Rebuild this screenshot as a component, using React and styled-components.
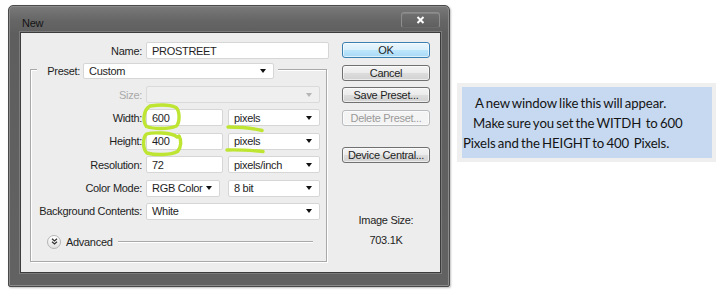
import React from 'react';
import styled, { createGlobalStyle } from 'styled-components';

const Global = createGlobalStyle`
    html, body {
        margin: 0;
        padding: 0;
        background: #ffffff;
    }
    * {
        box-sizing: border-box;
    }
`;

const Page = styled.div`
    position: relative;
    width: 723px;
    height: 291px;
    display: flex;
    align-items: flex-start;
    padding: 5px 0 0 8px;
    font-family: "Liberation Sans", Arial, sans-serif;
    font-size: 11px;
    letter-spacing: -0.3px;
    color: #1e1e1e;
`;

const Dialog = styled.div`
    width: 442px;
    height: 282px;
    display: flex;
    flex-direction: column;
    border: 1px solid #4a4a4a;
    border-radius: 5px 5px 2px 2px;
    background: linear-gradient(#7a7a7a 0px, #666666 14px, #5e5e5e 28px, #626262 100%);
    box-shadow: inset 0 0 0 1px #8c8c8c, 1px 1px 2px rgba(0, 0, 0, 0.25);
`;

const TitleBar = styled.div`
    height: 27px;
    display: flex;
    justify-content: space-between;
    align-items: flex-start;
    padding: 0 9px 0 13px;
`;

const Title = styled.span`
    margin-top: 10px;
    line-height: 14px;
    color: #151515;
`;

const CloseButton = styled.div`
    margin-top: 6px;
    width: 39px;
    height: 16px;
    border: 1px solid #8e8e8e;
    border-bottom-color: #6a6a6a;
    border-radius: 3px;
    background: linear-gradient(#707070, #5f5f5f);
    box-shadow: inset 0 1px 0 rgba(255, 255, 255, 0.15);
    display: flex;
    align-items: center;
    justify-content: center;
`;

const Content = styled.div`
    flex: 1;
    margin: 0 9px 14px 12px;
    display: flex;
    padding: 9px 10px 0 0;
    background: #ededed;
    box-shadow: 0 0 0 1px #3c3c3c, 0 0 0 2px #7c7c7c;
`;

const FormColumn = styled.div`
    width: 306px;
    display: flex;
    flex-direction: column;
`;

const NameRow = styled.div`
    display: grid;
    grid-template-columns: 121px 183px;
    column-gap: 4px;
    align-items: center;
`;

const Label = styled.span`
    text-align: right;
    white-space: nowrap;
    color: ${props => (props.disabled ? '#a9a9a9' : '#1e1e1e')};
`;

const Field = styled.div`
    height: ${props => props.h || 17}px;
    width: ${props => (props.w ? `${props.w}px` : 'auto')};
    display: flex;
    align-items: center;
    justify-content: space-between;
    padding: 0 7px 0 5px;
    background: ${props => (props.disabled ? '#efefef' : '#ffffff')};
    border: 1px solid ${props => (props.disabled ? '#dadada' : '#d6d6d6')};
    border-radius: 2px;
    white-space: nowrap;
`;

const Arrow = styled.span`
    width: 0;
    height: 0;
    border-left: 3.5px solid transparent;
    border-right: 3.5px solid transparent;
    border-top: 4px solid ${props => (props.disabled ? '#b5b5b5' : '#111111')};
`;

const Group = styled.div`
    margin: 10px 0 0 9px;
    width: 297px;
    height: 193px;
    border: 1px solid #a9a9a9;
    box-shadow: inset 1px 1px 0 #ffffff, 1px 1px 0 #ffffff;
    display: flex;
    flex-direction: column;
`;

const GroupHeader = styled.div`
    margin: -7px 0 0 6px;
    width: 241px;
    display: grid;
    grid-template-columns: 43px 191px;
    column-gap: 3px;
    align-items: center;
    background: #ededed;
`;

const Rows = styled.div`
    margin-top: 7px;
    display: grid;
    grid-template-columns: 111px 174px;
    column-gap: 4px;
    row-gap: 6.4px;
    align-items: center;
`;

const Pair = styled.div`
    display: grid;
    grid-template-columns: ${props => props.first}px 92px;
    justify-content: space-between;
`;

const AdvancedRow = styled.div`
    margin-top: 15px;
    display: flex;
    align-items: center;
    padding: 0 13px 0 16px;
`;

const Disclosure = styled.span`
    width: 14px;
    height: 14px;
    border-radius: 50%;
    border: 1px solid #b4b4b4;
    background: linear-gradient(#ffffff, #e2e2e2);
    display: flex;
    align-items: center;
    justify-content: center;
`;

const AdvancedText = styled.span`
    margin-left: 5px;
`;

const Rule = styled.span`
    flex: 1;
    margin-left: 5px;
    height: 2px;
    border-top: 1px solid #a9a9a9;
    border-bottom: 1px solid #ffffff;
`;

const ButtonColumn = styled.div`
    width: 88px;
    margin-left: auto;
    display: flex;
    flex-direction: column;
    align-items: center;
`;

const Button = styled.div`
    width: 88px;
    height: 16px;
    margin-top: ${props => props.gap || 0}px;
    display: flex;
    align-items: center;
    justify-content: center;
    border-radius: 3px;
    border: 1px solid ${props => (props.primary ? '#3c7fb1' : props.disabled ? '#b8bcbf' : '#707070')};
    color: ${props => (props.disabled ? '#9a9a9a' : '#1e1e1e')};
    background: ${props => props.primary
        ? 'linear-gradient(#eaf6fd 0%, #d9f0fc 50%, #bee6fd 51%, #a7d9f5 100%)'
        : props.disabled
            ? '#f4f4f4'
            : 'linear-gradient(#f4f4f4 0%, #ebebeb 50%, #dddddd 51%, #d2d2d2 100%)'};
    box-shadow: inset 0 0 0 1px rgba(255, 255, 255, 0.6);
`;

const SizeText = styled.div`
    margin-top: ${props => props.gap}px;
    line-height: 14px;
    white-space: nowrap;
`;

const Note = styled.div`
    margin: 78px 0 0 7px;
    width: 259px;
    padding: 4px 4px 4px 5px;
    background: #efefef;
`;

const NoteInner = styled.div`
    height: 71px;
    padding: 6px 0 0 1px;
    background: #c6d9f1;
    font-family: Lato, "Liberation Sans", sans-serif;
    font-size: 13.2px;
    letter-spacing: -0.1px;
    color: #141414;
`;

const NoteLine = styled.div`
    line-height: 20px;
    padding-left: ${props => props.indent}px;
    white-space: pre;
    word-spacing: -1px;
`;

const Marks = styled.svg`
    position: absolute;
    left: 0;
    top: 0;
    pointer-events: none;
`;

const Select = ({ children, w, disabled }) => (
    <Field w={w} disabled={disabled}>
        <span>{children}</span>
        <Arrow disabled={disabled} />
    </Field>
);

const App = () => {
    return (
        <Page>
            <Global />
            <Dialog>
                <TitleBar>
                    <Title>New</Title>
                    <CloseButton>
                        <svg width="9" height="8" viewBox="0 0 9 8">
                            <path d="M1.5 1 L7.5 7 M7.5 1 L1.5 7" stroke="#ffffff" strokeWidth="2" />
                        </svg>
                    </CloseButton>
                </TitleBar>
                <Content>
                    <FormColumn>
                        <NameRow>
                            <Label>Name:</Label>
                            <Field>PROSTREET</Field>
                        </NameRow>
                        <Group>
                            <GroupHeader>
                                <Label>Preset:</Label>
                                <Field h={16}>
                                    <span>Custom</span>
                                    <Arrow />
                                </Field>
                            </GroupHeader>
                            <Rows>
                                <Label disabled>Size:</Label>
                                <Select disabled />

                                <Label>Width:</Label>
                                <Pair first={77}>
                                    <Field>600</Field>
                                    <Select>pixels</Select>
                                </Pair>

                                <Label>Height:</Label>
                                <Pair first={77}>
                                    <Field>400</Field>
                                    <Select>pixels</Select>
                                </Pair>

                                <Label>Resolution:</Label>
                                <Pair first={77}>
                                    <Field>72</Field>
                                    <Select>pixels/inch</Select>
                                </Pair>

                                <Label>Color Mode:</Label>
                                <Pair first={74}>
                                    <Select>RGB Color</Select>
                                    <Select>8 bit</Select>
                                </Pair>

                                <Label>Background Contents:</Label>
                                <Select>White</Select>
                            </Rows>
                            <AdvancedRow>
                                <Disclosure>
                                    <svg width="7" height="7" viewBox="0 0 7 7">
                                        <path d="M1 0.8 L3.5 3 L6 0.8 M1 3.8 L3.5 6 L6 3.8" fill="none" stroke="#333333" strokeWidth="1.2" />
                                    </svg>
                                </Disclosure>
                                <AdvancedText>Advanced</AdvancedText>
                                <Rule />
                            </AdvancedRow>
                        </Group>
                    </FormColumn>
                    <ButtonColumn>
                        <Button primary>OK</Button>
                        <Button gap={7}>Cancel</Button>
                        <Button gap={6}>Save Preset...</Button>
                        <Button gap={7} disabled>Delete Preset...</Button>
                        <Button gap={21}>Device Central...</Button>
                        <SizeText gap={50}>Image Size:</SizeText>
                        <SizeText gap={6}>703.1K</SizeText>
                    </ButtonColumn>
                </Content>
            </Dialog>
            <Note>
                <NoteInner>
                    <NoteLine indent={12}>A new window like this will appear.</NoteLine>
                    <NoteLine indent={10}>Make sure you set the WITDH  to 600</NoteLine>
                    <NoteLine indent={0}>Pixels and the HEIGHT to 400  Pixels.</NoteLine>
                </NoteInner>
            </Note>
            <Marks width="723" height="291" viewBox="0 0 723 291">
                <g fill="none" stroke="#bde532" strokeWidth="3.4" strokeLinecap="round" strokeLinejoin="round">
                    <path d="M150 106 C160 104.5 171 105 176 107.5 C180 111 180 122 176.5 126 C168 129.5 153 129 146.5 126.5 C142.5 122 143 110 150 106" />
                    <path d="M177 137 C172 132.5 153 132 146.5 134 C142.5 138 142.5 149 147 153 C156 155.5 171 155 177.5 151.5 C181.5 147 181.5 140 179 136" />
                    <path d="M228 127 C240 127 252 128 262 130.5" />
                    <path d="M227 150 C240 149.5 252 150.5 263 151.5" />
                </g>
            </Marks>
        </Page>
    );
};

export default App;
